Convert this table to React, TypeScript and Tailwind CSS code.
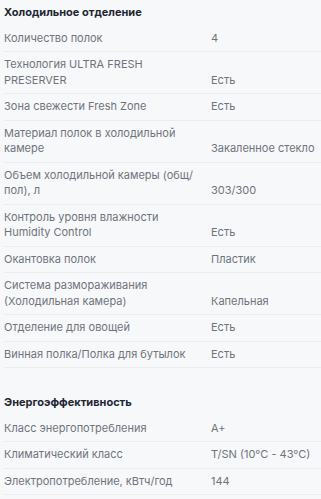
const SECTIONS = [
  {
    title: "Холодильное отделение",
    rows: [
      ["Количество полок", "4"],
      ["Технология ULTRA FRESH PRESERVER", "Есть"],
      ["Зона свежести Fresh Zone", "Есть"],
      ["Материал полок в холодильной камере", "Закаленное стекло"],
      ["Объем холодильной камеры (общ/пол), л", "303/300"],
      ["Контроль уровня влажности Humidity Control", "Есть"],
      ["Окантовка полок", "Пластик"],
      ["Система размораживания (Холодильная камера)", "Капельная"],
      ["Отделение для овощей", "Есть"],
      ["Винная полка/Полка для бутылок", "Есть"],
    ],
  },
  {
    title: "Энергоэффективность",
    rows: [
      ["Класс энергопотребления", "A+"],
      ["Климатический класс", "T/SN (10°C - 43°C)"],
      ["Электропотребление, кВтч/год", "144"],
    ],
  },
];

export default function App() {
  return (
    <div className="min-h-screen w-[321px] bg-[#f7f8fa] pl-1 font-['Inter',sans-serif] text-[11px] leading-[15.5px]">
      {SECTIONS.map((section, i) => (
        <div key={section.title} className={i > 0 ? "mt-[22px]" : ""}>
          <h3 className="pt-[5px] pb-[5px] font-bold text-[#1e2633]">{section.title}</h3>
          {section.rows.map(([label, value]) => (
            <div
              key={label}
              className="flex items-end border-b border-[#eaecef] py-[5px] text-[#6f747c]"
            >
              <div className="w-[207px] shrink-0 pr-3">{label}</div>
              <div className="flex-1">{value}</div>
            </div>
          ))}
        </div>
      ))}
    </div>
  );
}
